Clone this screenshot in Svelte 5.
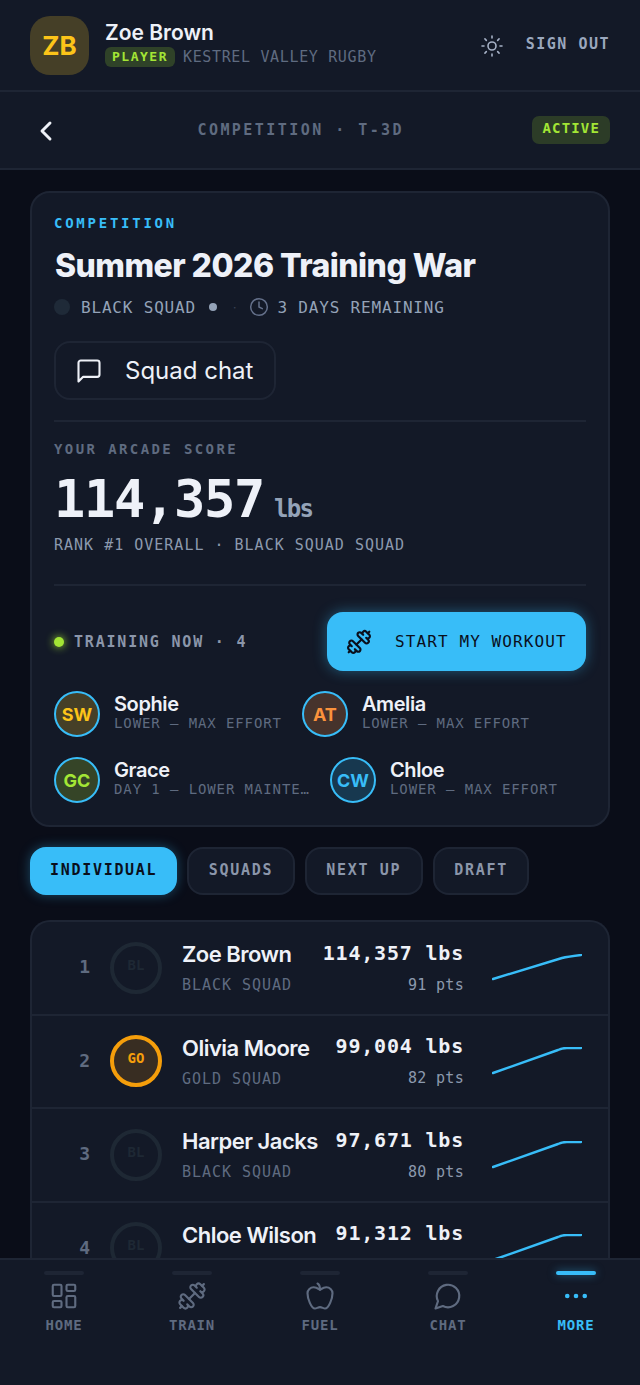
<script>
  const trainers = [
    [{ i: 'SW', c: 'gold', n: 'Sophie', w: 'LOWER — MAX EFFORT' }, { i: 'AT', c: 'orange', n: 'Amelia', w: 'LOWER — MAX EFFORT' }],
    [{ i: 'GC', c: 'lime', n: 'Grace', w: 'DAY 1 — LOWER MAINTENANCE' }, { i: 'CW', c: 'sky', n: 'Chloe', w: 'LOWER — MAX EFFORT' }]
  ];
  const rows = [
    { r: 1, a: 'BL', n: 'Zoe Brown', s: 'BLACK SQUAD', l: '114,357 lbs', p: '91 pts', d: 'M1 24 L70 3 Q76 1.500 89 0' },
    { r: 2, a: 'GO', g: true, n: 'Olivia Moore', s: 'GOLD SQUAD', l: '99,004 lbs', p: '82 pts', d: 'M1 25 L66 2 Q70 0 75 0 L89 0' },
    { r: 3, a: 'BL', n: 'Harper Jacks', s: 'BLACK SQUAD', l: '97,671 lbs', p: '80 pts', d: 'M1 25 L66 2 Q70 0 75 0 L89 0' },
    { r: 4, a: 'BL', n: 'Chloe Wilson', s: 'BLACK SQUAD', l: '91,312 lbs', p: '78 pts', d: 'M1 25 L66 2 Q70 0 75 0 L89 0' }
  ];
  const tabs = ['INDIVIDUAL', 'SQUADS', 'NEXT UP', 'DRAFT'];
  const nav = ['HOME', 'TRAIN', 'FUEL', 'CHAT', 'MORE'];
</script>

{#snippet dumbbell()}
  <g transform="translate(24 0) scale(-1 1)">
    <path d="M14.4 14.4 9.6 9.6" />
    <path d="M18.657 21.485a2 2 0 1 1-2.829-2.828l-1.767 1.768a2 2 0 1 1-2.829-2.829l6.364-6.364a2 2 0 1 1 2.829 2.829l-1.768 1.767a2 2 0 1 1 2.828 2.829z" />
    <path d="m21.5 21.5-1.4-1.4" />
    <path d="M3.9 3.9 2.5 2.5" />
    <path d="M6.404 12.768a2 2 0 1 1-2.829-2.829l1.768-1.767a2 2 0 1 1-2.828-2.829l2.828-2.828a2 2 0 1 1 2.829 2.828l1.767-1.768a2 2 0 1 1 2.829 2.829z" />
  </g>
{/snippet}

<div class="screen">
  <header class="top">
    <div class="logo">ZB</div>
    <div class="who">
      <div class="name">Zoe Brown</div>
      <div class="meta"><span class="role">PLAYER</span><span class="club">KESTREL VALLEY RUGBY</span></div>
    </div>
    <svg class="sun" viewBox="0 0 24 24"><circle cx="12" cy="12" r="4" /><path d="M12 2v2M12 20v2M4.930 4.930l1.410 1.410M17.660 17.660l1.410 1.410M2 12h2M20 12h2M6.340 17.660l-1.410 1.410M19.070 4.930l-1.410 1.410" /></svg>
    <span class="signout">SIGN OUT</span>
  </header>

  <div class="sub">
    <svg class="back" viewBox="0 0 24 24"><path d="m15 18-6-6 6-6" /></svg>
    <span class="crumb">COMPETITION · T-3D</span>
    <span class="active">ACTIVE</span>
  </div>

  <main class="content">
    <section class="card">
      <div class="eyebrow">COMPETITION</div>
      <h1>Summer 2026 Training War</h1>
      <div class="facts">
        <span class="squad-dot"></span>
        <span class="fact">BLACK SQUAD</span>
        <span class="small-dot"></span>
        <span class="tiny-dot">·</span>
        <svg class="clock" viewBox="0 0 24 24"><circle cx="12" cy="12" r="10" /><path d="M12 6v6l4 2" /></svg>
        <span class="fact">3 DAYS REMAINING</span>
      </div>
      <div class="chat-btn">
        <svg viewBox="0 0 24 24"><path d="M21 15a2 2 0 0 1-2 2H7l-4 4V5a2 2 0 0 1 2-2h14a2 2 0 0 1 2 2z" /></svg>
        <span>Squad chat</span>
      </div>

      <div class="score">
        <div class="score-label">YOUR ARCADE SCORE</div>
        <div class="score-value">114,357<small>lbs</small></div>
        <div class="score-rank">RANK #1 OVERALL · BLACK SQUAD SQUAD</div>
      </div>

      <div class="training">
        <div class="now"><span class="live"></span>TRAINING NOW · 4</div>
        <div class="start">
          <svg viewBox="0 0 24 24">{@render dumbbell()}</svg>
          <span>START MY WORKOUT</span>
        </div>
      </div>

      <div class="people">
        {#each trainers as line}
          <div class="people-row">
            {#each line as t}
              <div class="person">
                <div class="pa {t.c}">{t.i}</div>
                <div class="pinfo">
                  <div class="pname">{t.n}</div>
                  <div class="pwork">{t.w}</div>
                </div>
              </div>
            {/each}
          </div>
        {/each}
      </div>
    </section>

    <div class="tabs">
      {#each tabs as t, i}
        <div class="tab" class:on={i === 0}>{t}</div>
      {/each}
    </div>

    <section class="board">
      {#each rows as r}
        <div class="row">
          <span class="rank">{r.r}</span>
          <div class="ra" class:g={r.g}>{r.a}</div>
          <div class="rn">
            <div class="rname">{r.n}</div>
            <div class="rsquad">{r.s}</div>
          </div>
          <div class="rv">
            <div class="lbs">{r.l}</div>
            <div class="pts">{r.p}</div>
          </div>
          <svg class="spark" viewBox="0 -1 90 28"><path d={r.d} /></svg>
        </div>
      {/each}
    </section>
  </main>

  <nav class="nav">
    {#each nav as n, i}
      <div class="ni" class:on={i === 4}>
        <span class="bar"></span>
        <svg viewBox="0 0 24 24">
          {#if i === 0}
            <rect x="3" y="3" width="7" height="9" rx="1" /><rect x="14" y="3" width="7" height="5" rx="1" /><rect x="14" y="12" width="7" height="9" rx="1" /><rect x="3" y="16" width="7" height="5" rx="1" />
          {:else if i === 1}
            {@render dumbbell()}
          {:else if i === 2}
            <path d="M12 20.940c1.500 0 2.750 1.060 4 1.060 3 0 6-8 6-12.220A4.910 4.910 0 0 0 17 5c-2.220 0-4 1.440-5 2-1-.56-2.780-2-5-2a4.900 4.900 0 0 0-5 4.780C2 14 5 22 8 22c1.250 0 2.500-1.060 4-1.060Z" /><path d="M10 2c1 .5 2 2 2 5" />
          {:else if i === 3}
            <path d="M7.900 20A9 9 0 1 0 4 16.100L2 22Z" />
          {:else}
            <circle cx="5" cy="12" r="1" class="fill" /><circle cx="12" cy="12" r="1" class="fill" /><circle cx="19" cy="12" r="1" class="fill" />
          {/if}
        </svg>
        <span class="nl">{n}</span>
      </div>
    {/each}
  </nav>
</div>

<style>
  :global(body) { margin: 0; background: #0a0d18; }
  * { box-sizing: border-box; }
  svg { fill: none; stroke: currentColor; stroke-width: 2; stroke-linecap: round; stroke-linejoin: round; display: block; flex: none; }
  .screen { position: relative; width: 640px; height: 1385px; overflow: hidden; background: #0a0d18; color: #eef1f8; font-family: Inter, "Liberation Sans", sans-serif; }
  .top { height: 92px; padding: 0 30px; display: flex; align-items: center; background: #131927; border-bottom: 2px solid #1e2534; }
  .logo { width: 59px; height: 59px; border-radius: 20px; background: #453f27; color: #fcc419; display: flex; align-items: center; justify-content: center; font: 700 26px Inter, sans-serif; }
  .who { margin-left: 16px; flex: 1; }
  .name { font-size: 21px; font-weight: 600; line-height: 24px; margin-top: -2px; }
  .meta { display: flex; align-items: center; margin-top: 2px; }
  .role { height: 20px; padding: 0 7px; border-radius: 6px; background: #2f4228; color: #a3e635; font: 700 13px/20px "DejaVu Sans Mono", monospace; letter-spacing: 1.500px; }
  .club { margin-left: 8px; color: #5f6b80; font: 400 15px "DejaVu Sans Mono", monospace; letter-spacing: 0.650px; }
  .sun { width: 24px; height: 24px; margin-top: 1px; color: #a6b1c6; stroke-width: 1.600; margin-right: 22px; }
  .signout { margin-top: -2px; color: #9aa7bd; font: 600 15px "DejaVu Sans Mono", monospace; letter-spacing: 1.500px; }
  .sub { height: 78px; padding: 0 30px; display: flex; align-items: center; justify-content: space-between; background: #131927; border-bottom: 2px solid #1e2534; }
  .back { width: 32px; height: 32px; margin-top: 2px; color: #eef1f8; stroke-width: 2.200; }
  .crumb { margin-left: 8px; color: #5f6b80; font: 600 15px "DejaVu Sans Mono", monospace; letter-spacing: 2.450px; }
  .active { height: 28px; margin-top: -1px; padding: 0 10px 0 11px; border-radius: 7px; background: #2c3c27; color: #a3e635; font: 700 14px/24px "DejaVu Sans Mono", monospace; letter-spacing: 1.150px; }
  .content { padding: 21px 30px 0; }
  .card { height: 636px; padding: 21px 22px 0; border: 2px solid #1e2534; border-radius: 20px; background: #131927; }
  .eyebrow { color: #38bdf8; font: 600 14px/18px "DejaVu Sans Mono", monospace; letter-spacing: 2.750px; }
  h1 { margin: 14px 0 0 1px; font-size: 32px; line-height: 40px; font-weight: 800; letter-spacing: -0.550px; white-space: nowrap; }
  .facts { display: flex; align-items: center; margin-top: 9px; height: 24px; color: #94a3b8; }
  .squad-dot { width: 16px; height: 16px; border-radius: 50%; background: #1f2a38; }
  .fact { font: 400 16px "DejaVu Sans Mono", monospace; letter-spacing: 0.820px; }
  .squad-dot + .fact { margin-left: 11px; }
  .small-dot { width: 8px; height: 8px; border-radius: 50%; background: #94a3b8; margin-left: 13px; }
  .tiny-dot { color: #3b4557; font-size: 12px; margin-left: 16px; }
  .clock { width: 20px; height: 20px; color: #64708a; stroke-width: 1.800; margin: 0 8px 0 13px; }
  .chat-btn { width: 222px; height: 59px; margin-top: 22px; padding-left: 19px; display: flex; align-items: center; gap: 22px; border: 2px solid #1e2534; border-radius: 16px; }
  .chat-btn span { font-size: 24px; }
  .chat-btn svg { width: 28px; height: 28px; stroke-width: 1.800; }
  .score { margin-top: 20px; padding: 19px 0 30px; border-top: 2px solid #1e2534; border-bottom: 2px solid #1e2534; }
  .score-label { color: #5f6b80; font: 600 14px/16px "DejaVu Sans Mono", monospace; letter-spacing: 2.400px; }
  .score-value { margin-top: 11px; font: 700 52px/62px "DejaVu Sans Mono", monospace; letter-spacing: -1.300px; white-space: nowrap; }
  .score-value small { color: #94a3b8; font-size: 24px; letter-spacing: -1.700px; margin-left: 10px; }
  .score-rank { margin-top: -4px; color: #8c99ae; font: 400 15px "DejaVu Sans Mono", monospace; letter-spacing: 1px; }
  .training { display: flex; align-items: center; justify-content: space-between; margin-top: 26px; }
  .now { display: flex; align-items: center; color: #8b96aa; font: 600 15px "DejaVu Sans Mono", monospace; letter-spacing: 1.800px; }
  .live { width: 10px; height: 10px; margin-right: 10px; border-radius: 50%; background: #a3e635; box-shadow: 0 0 8px #a3e635; }
  .start { width: 259px; height: 59px; padding-left: 19px; display: flex; align-items: center; gap: 23px; border-radius: 16px; background: #38bdf8; color: #0a0f1c; box-shadow: 0 0 14px rgba(56, 189, 248, 0.4); font: 500 16px "DejaVu Sans Mono", monospace; letter-spacing: 1.100px; }
  .start svg { width: 26px; height: 26px; stroke-width: 2; }
  .people { margin-top: 20px; display: flex; flex-direction: column; gap: 20px; }
  .people-row { display: flex; gap: 20px; }
  .person { display: flex; align-items: center; gap: 14px; min-width: 0; }
  .people-row .person:first-child { max-width: 256px; }
  .pa { width: 46px; height: 46px; flex: none; border-radius: 50%; border: 2px solid #38bdf8; display: flex; align-items: center; justify-content: center; font: 700 18px Inter, sans-serif; }
  .gold { background: #453f27; color: #fcc419; }
  .orange { background: #46332c; color: #fb923c; }
  .lime { background: #354427; color: #a3e635; }
  .sky { background: #17384f; color: #38bdf8; }
  .pinfo { min-width: 0; padding-bottom: 4px; }
  .pname { font-size: 20px; line-height: 22px; font-weight: 600; letter-spacing: -0.400px; }
  .pwork { color: #5f6b80; font: 400 14px/16px "DejaVu Sans Mono", monospace; letter-spacing: 0.900px; white-space: nowrap; overflow: hidden; text-overflow: ellipsis; }
  .tabs { display: flex; gap: 10px; margin-top: 20px; }
  .tab { height: 48px; padding: 0 19.500px; border: 2px solid #1e2534; border-radius: 16px; background: #131927; color: #8b96aa; font: 600 15px/42px "DejaVu Sans Mono", monospace; letter-spacing: 1.700px; }
  .tab.on { padding: 0 18px; background: #38bdf8; border-color: #38bdf8; color: #0a0f1c; box-shadow: 0 0 12px rgba(56, 189, 248, 0.35); }
  .board { margin-top: 25px; border: 2px solid #1e2534; border-bottom: 0; border-radius: 20px 20px 0 0; background: #131927; overflow: hidden; }
  .row { height: 93.500px; display: flex; align-items: center; padding: 0 26px 0 0; border-bottom: 2px solid #1e2534; }
  .rank { width: 58px; margin-top: -2px; text-align: right; color: #5f6b80; font: 600 18px "DejaVu Sans Mono", monospace; }
  .ra { width: 52px; height: 52px; margin-left: 20px; flex: none; border-radius: 50%; border: 4px solid #1e2834; color: #1e2834; display: flex; align-items: center; justify-content: center; font: 600 14px "DejaVu Sans Mono", monospace; padding-bottom: 6px; }
  .ra.g { border-color: #f59e0b; background: #382d22; color: #f59e0b; }
  .rn { margin-left: 20px; flex: 1; }
  .rname { font-size: 22px; font-weight: 600; line-height: 26px; letter-spacing: -0.500px; white-space: nowrap; }
  .rsquad { margin-top: 9px; color: #5f6b80; font: 400 15px/18px "DejaVu Sans Mono", monospace; letter-spacing: 0.970px; }
  .rv { text-align: right; margin-top: -2px; }
  .lbs { font: 600 20px/26px "DejaVu Sans Mono", monospace; letter-spacing: 0.800px; }
  .pts { margin-top: 10px; color: #8c99ae; font: 400 15px/18px "DejaVu Sans Mono", monospace; letter-spacing: 0.300px; }
  .spark { width: 90px; height: 28px; margin-left: 28px; margin-top: 0; color: #38bdf8; stroke-width: 2.400; }
  .nav { position: absolute; left: 0; right: 0; bottom: 0; height: 127px; padding: 11px 0 0; display: flex; justify-content: space-around; background: #131927; border-top: 2px solid #1e2534; }
  .ni { width: 128px; display: flex; flex-direction: column; align-items: center; color: #5f6b80; }
  .bar { width: 40px; height: 4px; border-radius: 2px; background: #1e2534; margin-bottom: 6px; }
  .ni svg { width: 30px; height: 30px; stroke-width: 1.700; }
  .nl { margin-top: 5px; font: 600 14px/18px "DejaVu Sans Mono", monospace; letter-spacing: 0.800px; }
  .ni.on { color: #38bdf8; }
  .ni.on .bar { background: #38bdf8; box-shadow: 0 0 8px rgba(56, 189, 248, 0.5); }
  .fill { fill: currentColor; }
</style>
